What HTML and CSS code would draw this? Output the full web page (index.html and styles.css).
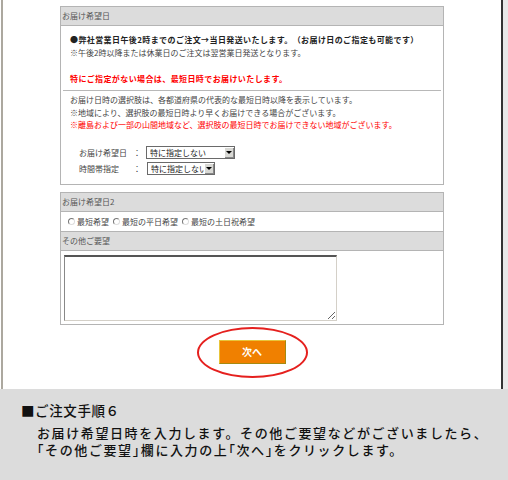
FILE: index.html
```html
<!DOCTYPE html>
<html lang="ja">
<head>
    <meta charset="UTF-8">
    <meta name="viewport" content="width=device-width, initial-scale=1.0">
    <title>ご注文手順６</title>
    <link rel="stylesheet" href="styles.css">
</head>
<body>
    <div class="page">
        <div class="top">
            <div class="sheet">
                <div class="box">
                    <div class="box-head">お届け希望日</div>
                    <div class="box-body">
                        <div class="notice">
                            <p class="strong">●弊社営業日午後2時までのご注文→当日発送いたします。（お届け日のご指定も可能です）</p>
                            <p>※午後2時以降または休業日のご注文は翌営業日発送となります。</p>
                            <p class="strong red gap">特にご指定がない場合は、最短日時でお届けいたします。</p>
                        </div>
                        <div class="info">
                            <p>お届け日時の選択肢は、各都道府県の代表的な最短日時以降を表示しています。</p>
                            <p>※地域により、選択肢の最短日時より早くお届けできる場合がございます。</p>
                            <p class="red">※離島および一部の山間地域など、選択肢の最短日時でお届けできない地域がございます。</p>
                            <div class="fields">
                                <div class="field">
                                    <span class="label">お届け希望日</span>
                                    <span class="colon">：</span>
                                    <span class="select">
                                        <select class="date-select">
                                            <option>特に指定しない</option>
                                        </select>
                                    </span>
                                </div>
                                <div class="field">
                                    <span class="label">時間帯指定</span>
                                    <span class="colon">：</span>
                                    <span class="select shift">
                                        <select class="time-select">
                                            <option>特に指定しない</option>
                                        </select>
                                    </span>
                                </div>
                            </div>
                        </div>
                    </div>
                </div>

                <div class="box box2">
                    <div class="box-head">お届け希望日2</div>
                    <div class="radio-row">
                        <label><input type="radio" name="wish">最短希望</label>
                        <label><input type="radio" name="wish">最短の平日希望</label>
                        <label><input type="radio" name="wish">最短の土日祝希望</label>
                    </div>
                    <div class="box-head">その他ご要望</div>
                    <div class="memo">
                        <textarea></textarea>
                    </div>
                </div>

                <div class="actions">
                    <span class="btn-wrap">
                        <button class="next">次へ</button>
                        <span class="ring"></span>
                    </span>
                </div>
            </div>
        </div>

        <div class="guide">
            <h2>■ご注文手順６</h2>
            <div class="steps">
                <span class="line">お届け希望日時を入力します。その他ご要望などがございましたら、</span>
                <span class="line half">「その他ご要望」欄に入力の上「次へ」をクリックします。</span>
            </div>
        </div>
    </div>
</body>
</html>
```

FILE: styles.css
```css
body {
    margin: 0;
    font-family: "Noto Sans CJK JP", "Noto Sans", sans-serif;
    color: #444;
}
.page {
    width: 508px;
    height: 480px;
    display: flex;
    flex-direction: column;
}
.top {
    height: 389px;
    background: #e8e8e8;
}
.sheet {
    box-sizing: border-box;
    width: 502px;
    height: 389px;
    margin-left: 1px;
    padding-top: 6px;
    background: #fff;
    border-left: 2px solid #aca89f;
    border-right: 2px solid #333;
    box-shadow: -1px 0 0 #fff;
}
.box {
    box-sizing: border-box;
    width: 384px;
    margin: 0 auto;
    border: 1px solid #b4b4b4;
}
.box2 {
    margin-top: 7px;
}
.box-head {
    height: 18px;
    line-height: 18px;
    padding-left: 1px;
    background: #dcdcdc;
    border-bottom: 1px solid #b4b4b4;
    font-size: 8px;
    color: #555;
}
.box-body {
    padding: 7px 0 9px;
}
p {
    margin: 0;
    font-size: 8px;
    line-height: 13px;
}
.strong {
    font-weight: bold;
    color: #222;
    letter-spacing: 0.4px;
}
.red {
    color: #ff0000;
}
.gap {
    margin-top: 13px;
}
.notice {
    padding: 0 9px;
}
.info {
    margin: 5px 2px 0;
    padding: 3px 7px 0;
    border-top: 1px solid #b8b8b8;
}
.info p {
    line-height: 12.5px;
}
.fields {
    margin-top: 14px;
    padding-left: 9px;
}
.field {
    display: flex;
    align-items: center;
    height: 13px;
    font-size: 8px;
}
.field + .field {
    margin-top: 3px;
}
.label {
    width: 54px;
}
.colon {
    width: 13px;
}
.select {
    position: relative;
    display: inline-block;
    height: 13px;
}
.select.shift {
    margin-left: 1px;
}
.select select {
    appearance: none;
    -webkit-appearance: none;
    box-sizing: border-box;
    height: 13px;
    margin: 0;
    padding: 0 0 0 3px;
    border: 1px solid #6a6a6a;
    border-radius: 0;
    background: #fff;
    font-family: inherit;
    font-size: 8px;
    line-height: 11px;
    color: #222;
}
.date-select {
    width: 89px;
}
.time-select {
    width: 68px;
}
.select::before {
    content: "";
    position: absolute;
    top: 1px;
    right: 1px;
    width: 10px;
    height: 11px;
    background: #d8d8d4;
    box-shadow: inset 1px 1px 0 #fff, inset -1px -1px 0 #888;
    pointer-events: none;
}
.select::after {
    content: "";
    position: absolute;
    top: 5px;
    right: 3px;
    border-left: 3px solid transparent;
    border-right: 3px solid transparent;
    border-top: 3px solid #000;
    pointer-events: none;
}
.radio-row {
    display: flex;
    align-items: center;
    height: 19px;
    padding-left: 7px;
    border-bottom: 1px solid #b4b4b4;
    font-size: 8px;
}
.radio-row label {
    display: flex;
    align-items: center;
    margin-right: 4px;
}
.radio-row input {
    appearance: none;
    -webkit-appearance: none;
    box-sizing: border-box;
    width: 7px;
    height: 7px;
    margin: 0 2px 0 0;
    border: 1px solid;
    border-color: #777 #ddd #ddd #777;
    border-radius: 50%;
    background: #fff;
}
.memo {
    padding: 4px 3px 3px;
}
.memo textarea {
    display: block;
    box-sizing: border-box;
    width: 273px;
    height: 66px;
    margin: 0;
    border: 1px solid #d4d0c8;
    border-top: 2px solid #555;
    border-left-color: #888;
    background: #fff;
}
.actions {
    display: flex;
    justify-content: center;
    margin-top: 15px;
}
.btn-wrap {
    position: relative;
    display: inline-block;
}
.next {
    display: block;
    width: 67px;
    height: 24px;
    padding: 0;
    border: 1px solid;
    border-color: #e8c43a #a58a10 #a58a10 #e8c43a;
    background: #f08000;
    color: #fff;
    font-family: inherit;
    font-size: 10px;
    font-weight: bold;
    cursor: pointer;
}
.ring {
    position: absolute;
    left: -22px;
    top: -13px;
    width: 111px;
    height: 51px;
    box-sizing: border-box;
    border: 2px solid #e5201e;
    border-radius: 50%;
    pointer-events: none;
}
.guide {
    flex: 1;
    background: #dcdcdc;
    padding: 12px 0 0 21px;
    color: #111;
}
.guide h2 {
    margin: 0;
    font-size: 13.5px;
    line-height: 18px;
    font-weight: 500;
    letter-spacing: 0.6px;
}
.steps {
    margin: 5px 0 0 16px;
    font-size: 13px;
    font-weight: 500;
    letter-spacing: 1.6px;
}
.line {
    display: block;
    line-height: 17px;
}
.half {
    font-feature-settings: "halt";
}
```
